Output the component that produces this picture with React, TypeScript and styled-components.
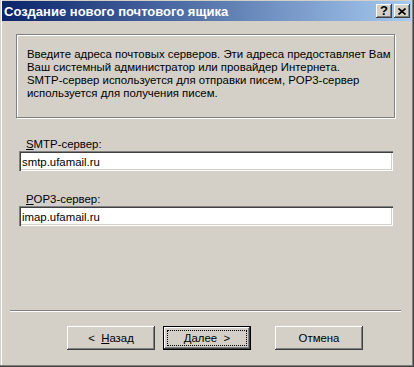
import React from "react";
import styled, { createGlobalStyle } from "styled-components";

const Global = createGlobalStyle`
  html, body { margin: 0; padding: 0; background: #d4d0c8; }
  body { font-family: "Liberation Sans", Arial, sans-serif; }
  * { box-sizing: border-box; }
`;

const FACE = "#d4d0c8";

const Window = styled.div`
  width: 414px;
  height: 367px;
  background: ${FACE};
  padding: 1px 3px 2px 2px;
  display: flex;
  flex-direction: column;
  box-shadow: inset -1px -1px 0 #404040, inset -2px -2px 0 #808080,
    inset 1px 0 0 ${FACE}, inset 2px 0 0 #fff;
`;

const TitleBar = styled.div`
  height: 20px;
  flex: none;
  display: flex;
  align-items: center;
  padding: 0 1px 0 2px;
  background: linear-gradient(to right, #0a246a, #a6caf0);
`;

const Title = styled.span`
  flex: 1;
  color: #fff;
  font: bold 13px "Liberation Sans", Arial, sans-serif;
  white-space: nowrap;
`;

const CaptionButton = styled.div<{ $gap?: number }>`
  width: 16px;
  height: 14px;
  margin-left: ${(p) => p.$gap ?? 0}px;
  background: ${FACE};
  display: flex;
  align-items: center;
  justify-content: center;
  box-shadow: inset -1px -1px 0 #404040, inset 1px 1px 0 #fff,
    inset -2px -2px 0 #808080;
  font: bold 13px "Liberation Sans", Arial, sans-serif;
  color: #000;
  line-height: 14px;
`;

const Body = styled.div`
  flex: 1;
  display: flex;
  flex-direction: column;
`;

const InfoBox = styled.div`
  margin: 13px 16px 19px 14px;
  height: 84px;
  padding: 13px 6px 0 10px;
  border: 1px solid #808080;
  box-shadow: 1px 1px 0 #fff, inset 1px 1px 0 #fff;
  font-size: 11.4px;
  line-height: 13px;
  color: #000;
`;

const Line = styled.div`
  white-space: nowrap;
`;

const FieldGroup = styled.div<{ $top?: number }>`
  display: flex;
  flex-direction: column;
  margin-top: ${(p) => p.$top ?? 0}px;
`;

const Label = styled.label`
  margin-left: 24px;
  font-size: 11.4px;
  line-height: 14px;
  color: #000;
`;

const Field = styled.input`
  margin: 0 18px 0 17px;
  height: 20px;
  border: none;
  outline: none;
  background: #fff;
  padding: 1px 0 0 3px;
  font: 11.4px "Liberation Sans", Arial, sans-serif;
  color: #000;
  box-shadow: inset 1px 1px 0 #808080, inset 2px 2px 0 #404040,
    inset -1px -1px 0 #fff, inset -2px -2px 0 ${FACE};
`;

const Spacer = styled.div`
  flex: 1;
`;

const Separator = styled.div`
  margin: 0 10px 0 8px;
  height: 2px;
  border-top: 1px solid #808080;
  border-bottom: 1px solid #fff;
`;

const ButtonRow = styled.div`
  display: flex;
  padding: 14px 0 15px 65px;
`;

const Button = styled.button<{ $default?: boolean; $gap?: number }>`
  position: relative;
  width: 88px;
  height: 24px;
  margin-left: ${(p) => p.$gap ?? 0}px;
  padding: 0;
  background: ${FACE};
  font: 11.4px "Liberation Sans", Arial, sans-serif;
  color: #000;
  white-space: pre;
  border: ${(p) => (p.$default ? "1px solid #000" : "none")};
  box-shadow: inset -1px -1px 0 #404040, inset 1px 1px 0 #fff,
    inset -2px -2px 0 #808080;
  ${(p) =>
    p.$default
      ? `&::after {
    content: "";
    position: absolute;
    inset: 3px;
    border: 1px dotted #000;
  }`
      : ""}
`;

export default function App() {
  return (
    <>
      <Global />
      <Window>
        <TitleBar>
          <Title>Создание нового почтового ящика</Title>
          <CaptionButton>?</CaptionButton>
          <CaptionButton $gap={2}>
            <svg width="8" height="7" viewBox="0 0 8 7">
              <path d="M0.5 0.5 L7.5 6.5 M7.5 0.5 L0.5 6.5" stroke="#000" strokeWidth="1.6" />
            </svg>
          </CaptionButton>
        </TitleBar>
        <Body>
          <InfoBox>
            <Line>Введите адреса почтовых серверов. Эти адреса предоставляет Вам</Line>
            <Line>Ваш системный администратор или провайдер Интернета.</Line>
            <Line>SMTP-сервер используется для отправки писем, POP3-сервер</Line>
            <Line>используется для получения писем.</Line>
          </InfoBox>
          <FieldGroup>
            <Label htmlFor="smtp">
              <u>S</u>MTP-сервер:
            </Label>
            <Field id="smtp" defaultValue="smtp.ufamail.ru" readOnly />
          </FieldGroup>
          <FieldGroup $top={21}>
            <Label htmlFor="pop3">
              <u>P</u>OP3-сервер:
            </Label>
            <Field id="pop3" defaultValue="imap.ufamail.ru" readOnly />
          </FieldGroup>
          <Spacer />
          <Separator />
          <ButtonRow>
            <Button>
              {"<\u00a0\u00a0"}
              <u>Н</u>азад
            </Button>
            <Button $default $gap={8}>
              <u>Д</u>алее{"\u00a0\u00a0>"}
            </Button>
            <Button $gap={24}>Отмена</Button>
          </ButtonRow>
        </Body>
      </Window>
    </>
  );
}
